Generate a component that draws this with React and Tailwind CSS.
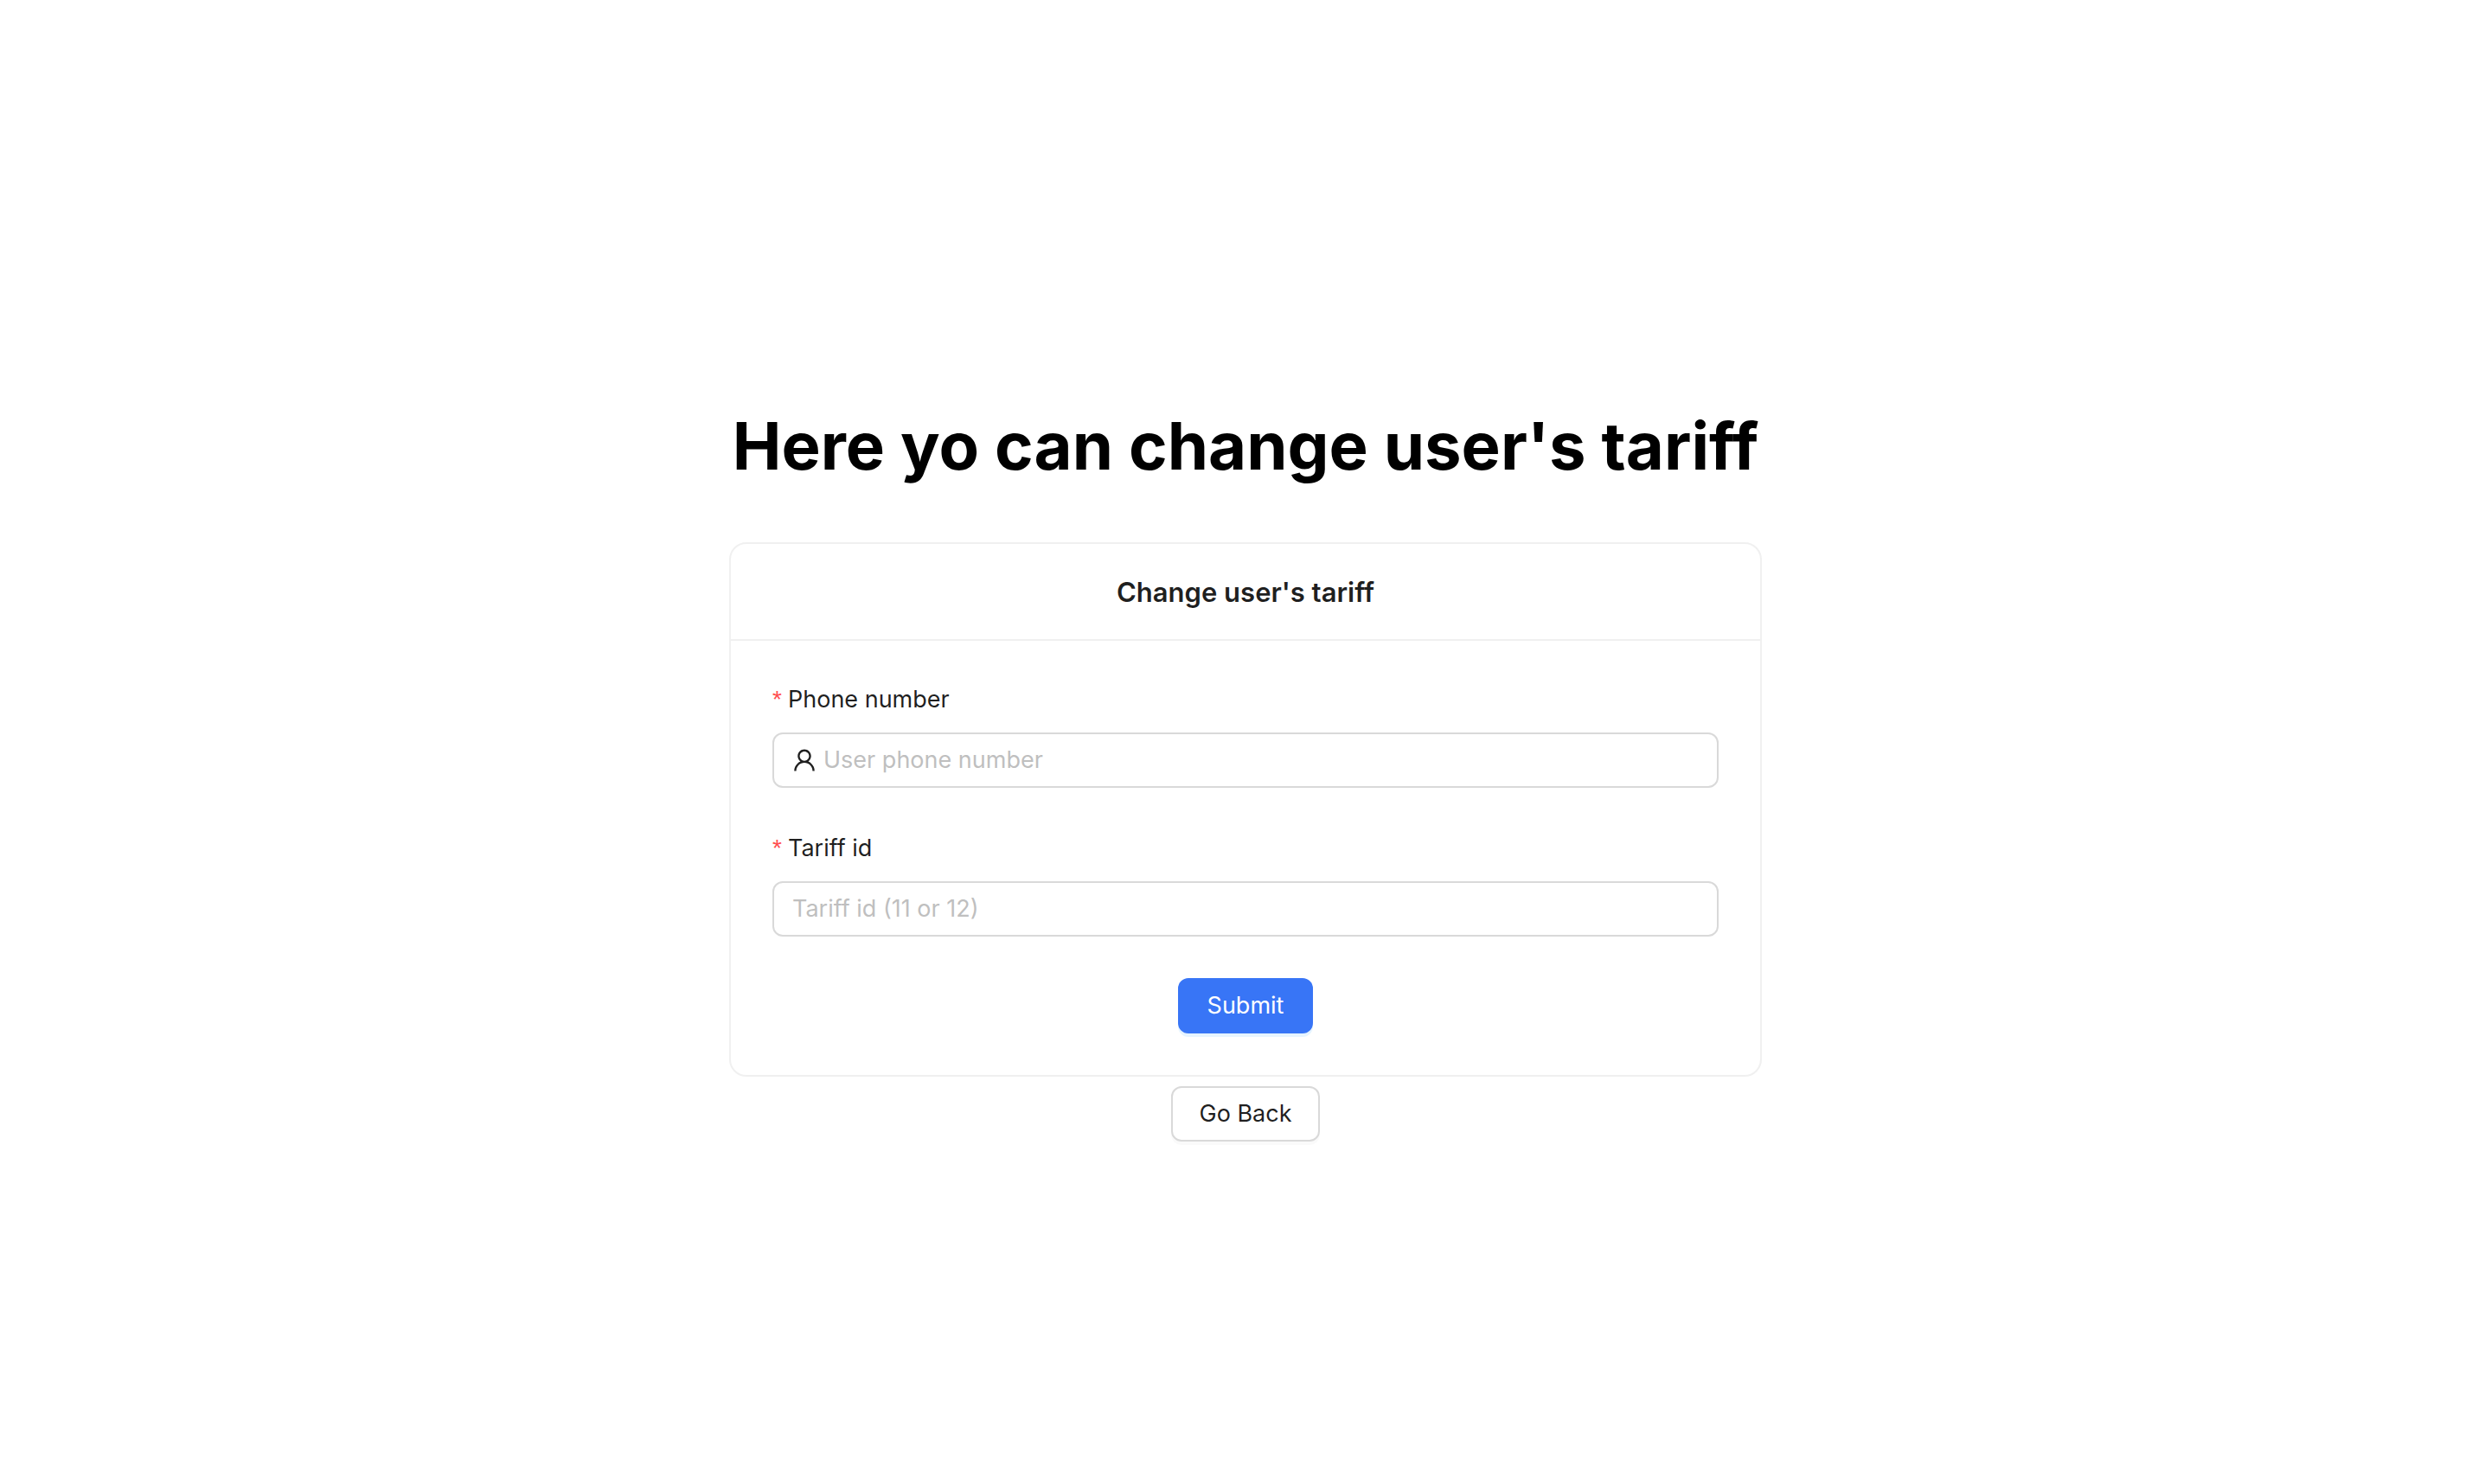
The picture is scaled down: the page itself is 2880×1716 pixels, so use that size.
import { AiOutlineUser } from "react-icons/ai";

const inputBox =
  "flex h-16 w-full items-center gap-2 rounded-xl border-2 border-[#d9d9d9] bg-white px-[21px] text-[27px] leading-[44px]";
const inputText =
  "w-full min-w-0 bg-transparent outline-none placeholder:text-[#bfbfbf]";

function Field({ id, label, placeholder, icon }) {
  return (
    <div className="mb-12">
      <label htmlFor={id} className="mb-4 flex gap-2 text-[27px] leading-[44px]">
        <span className="w-2.5 font-['Liberation_Sans'] text-[28px] text-[#ff4d4f]">*</span>
        {label}
      </label>
      <div className={inputBox}>
        {icon}
        <input id={id} type="text" required placeholder={placeholder} className={inputText} />
      </div>
    </div>
  );
}

export default function App() {
  return (
    <main className="flex min-h-screen flex-col items-center justify-center bg-white font-['Inter',sans-serif] text-black/88">
      <h1 className="mt-[74px] mb-[67px] text-center text-[76px] leading-[90px] font-bold whitespace-nowrap text-black">
        Here yo can change user's tariff
      </h1>
      <section className="w-full max-w-[1194px] rounded-[20px] border-2 border-[#f0f0f0] bg-white">
        <h2 className="border-b-2 border-[#f0f0f0] pt-8 pb-[30px] text-center text-[31px] leading-[48px] font-semibold">
          Change user's tariff
        </h2>
        <form className="px-12 pt-[46px] pb-12" onSubmit={(e) => e.preventDefault()}>
          <Field
            id="phone"
            label="Phone number"
            placeholder="User phone number"
            icon={<AiOutlineUser className="-mx-0.5 size-8 shrink-0" />}
          />
          <Field id="tariff" label="Tariff id" placeholder="Tariff id (11 or 12)" />
          <button
            type="submit"
            className="mx-auto block h-16 w-[156px] rounded-xl bg-[#3875f6] text-[27px] leading-[44px] text-white shadow-[0_4px_0_rgba(5,145,255,0.1)]"
          >
            Submit
          </button>
        </form>
      </section>
      <button
        type="button"
        className="mt-[11px] h-16 w-[172px] rounded-xl border-2 border-[#d9d9d9] bg-white text-[27px] leading-[44px] shadow-[0_4px_0_rgba(0,0,0,0.02)]"
      >
        Go Back
      </button>
    </main>
  );
}
